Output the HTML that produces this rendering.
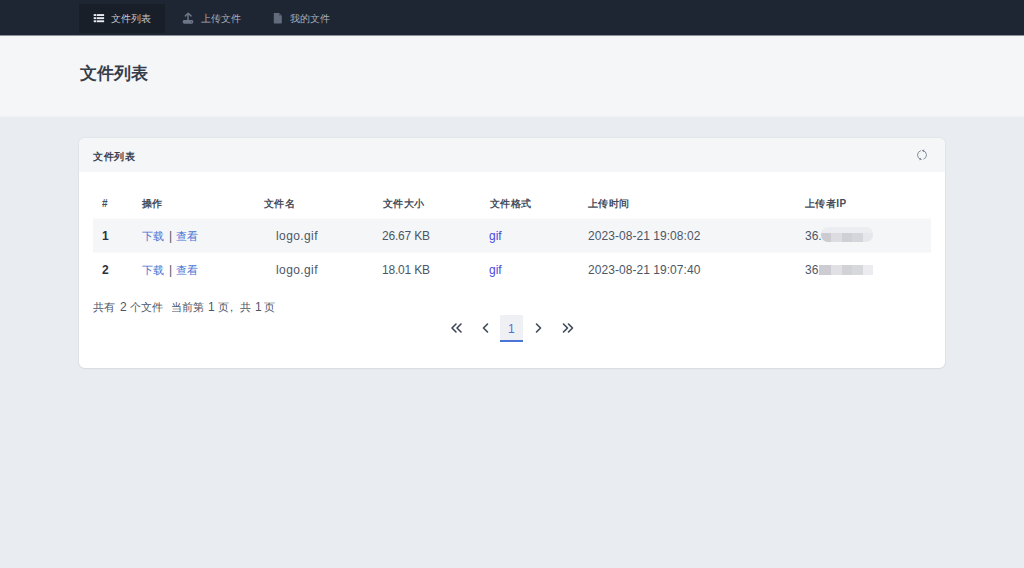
<!DOCTYPE html>
<html><head><meta charset="utf-8">
<style>
*{box-sizing:border-box;margin:0;padding:0}
html,body{width:1024px;height:568px;overflow:hidden}
body{font-family:"Liberation Sans",sans-serif;background:#e9ecf1;color:#1d2939;position:relative}
.abs{position:absolute}
.nav{position:absolute;left:0;top:0;width:1024px;height:35px;background:#1f2633}
.tab-act{position:absolute;left:79px;top:4px;width:86px;height:29px;background:#191f28}
.hdr{position:absolute;left:0;top:35px;width:1024px;height:82px;background:#f5f6f8;border-top:1px solid #8d9199;border-bottom:1px solid #eff1f4}
.card{position:absolute;left:79px;top:138px;width:866px;height:230px;background:#fff;border-radius:6px;overflow:hidden;box-shadow:0 0 0 1px rgba(40,50,70,.03),0 1px 2px rgba(40,50,70,.05)}
.card-h{position:absolute;left:0;top:0;width:866px;height:34px;background:#f5f6f8}
.t{position:absolute;font-size:12px;white-space:nowrap;line-height:20px}
.cj{font-size:11px}
.gif{color:#4b48dc}
.th{font-size:10px;font-weight:bold;color:#454d5b;letter-spacing:.4px}
.row1{position:absolute;left:14px;top:80px;width:838px;height:35px;background:#f5f6f8;border-top:1px solid #fafbfc;border-bottom:1px solid #f9fafb}
.lnk{color:#4a74d6}
.gray{color:#4d5666}
.num{font-weight:bold;color:#2b3340}
.navt{font-size:10px;line-height:20px}
.mz{position:absolute;height:10px}
</style></head><body>
<div class="nav"><div class="tab-act"></div></div>

<!-- list icon -->
<svg class="abs" style="left:93px;top:13px" width="12" height="11" viewBox="0 0 12 11">
  <g fill="#e8ebf0">
    <rect x="0.7" y="1.1" width="2.5" height="1.9"/><rect x="3.8" y="1.1" width="7.3" height="1.9"/>
    <rect x="0.7" y="4.2" width="2.5" height="1.9"/><rect x="3.8" y="4.2" width="7.3" height="1.9"/>
    <rect x="0.7" y="7.3" width="2.5" height="1.9"/><rect x="3.8" y="7.3" width="7.3" height="1.9"/>
  </g>
</svg>
<div class="t navt" style="left:111px;top:9px;color:#c3c8d1">文件列表</div>

<!-- upload icon -->
<svg class="abs" style="left:182px;top:12px" width="12" height="13" viewBox="0 0 12 13">
  <g fill="none" stroke="#6c7686" stroke-width="1.5" stroke-linecap="round" stroke-linejoin="round">
    <path d="M3.4 3.9 L6.2 1.3 L9 3.9"/><path d="M6 2 L6 8.5"/>
  </g>
  <rect x="0.8" y="8" width="10.4" height="3.7" rx="1.4" fill="#6c7686"/>
  <circle cx="9.3" cy="9.7" r="0.55" fill="#2a3240"/>
</svg>
<div class="t navt" style="left:201px;top:9px;color:#a7aebb">上传文件</div>

<!-- file icon -->
<svg class="abs" style="left:273px;top:12px" width="10" height="12" viewBox="0 0 10 12">
  <path d="M0.8 1.6 Q0.8 1 1.4 1 L6 1 L8.8 3.8 L8.8 10.8 Q8.8 11.4 8.2 11.4 L1.4 11.4 Q0.8 11.4 0.8 10.8 Z" fill="#626c7c"/>
  <path d="M6 1 L6 3.8 L8.8 3.8 Z" fill="#465062"/>
</svg>
<div class="t navt" style="left:290px;top:9px;color:#a7aebb">我的文件</div>

<div class="hdr"></div>
<div class="t" style="left:80px;top:64px;font-size:17px;line-height:20px;font-weight:bold;color:#353d4b">文件列表</div>

<div class="card">
  <div class="card-h"></div>
  <div class="row1"></div>
</div>
<div class="t" style="left:93px;top:147px;font-size:10px;letter-spacing:.6px;font-weight:bold;color:#3a4250">文件列表</div>

<!-- refresh icon -->
<svg class="abs" style="left:915.4px;top:148.4px" width="14" height="14" viewBox="0 0 14 14">
  <g fill="none" stroke="#838d9c" stroke-width="1" stroke-linecap="round">
    <path d="M5.46 2.77 A4.5 4.5 0 0 0 5.61 11.28"/>
    <path d="M8.83 11.11 A4.5 4.5 0 0 0 8.09 2.63"/>
  </g>
  <g fill="#838d9c">
    <path d="M6.98 11.72 L4.26 12.31 L5.13 9.65 Z"/>
    <path d="M6.69 2.29 L9.36 1.51 L8.68 4.22 Z"/>
  </g>
</svg>
<div class="t th" style="left:102px;top:194px">#</div>
<div class="t th" style="left:142px;top:194px">操作</div>
<div class="t th" style="left:264px;top:194px">文件名</div>
<div class="t th" style="left:383px;top:194px">文件大小</div>
<div class="t th" style="left:490px;top:194px">文件格式</div>
<div class="t th" style="left:588px;top:194px">上传时间</div>
<div class="t th" style="left:805px;top:194px">上传者IP</div>

<div class="t num" style="left:102px;top:226px">1</div>
<div class="t lnk cj" style="left:142px;top:226px">下载</div>
<div class="t gray" style="left:169px;top:226px">|</div>
<div class="t lnk cj" style="left:176px;top:226px">查看</div>
<div class="t gray" style="left:276px;top:226px;letter-spacing:.4px">logo.gif</div>
<div class="t gray" style="left:382px;top:226px;letter-spacing:-.2px">26.67 KB</div>
<div class="t gif" style="left:489px;top:226px">gif</div>
<div class="t gray" style="left:588px;top:226px;letter-spacing:.05px">2023-08-21 19:08:02</div>
<div class="t gray" style="left:805px;top:226px">36.</div>
<div class="abs" style="left:821px;top:227px;width:52px;height:15px;border-radius:7px;overflow:hidden">
  <div class="mz" style="left:0;top:0;width:52px;height:6px;background:#ecedf0"></div>
  <div class="mz" style="left:0;top:6px;width:10px;height:9px;background:#cbcbd1"></div>
  <div class="mz" style="left:10px;top:6px;width:11px;height:9px;background:#dcdce1"></div>
  <div class="mz" style="left:21px;top:6px;width:10px;height:9px;background:#cfd0d5"></div>
  <div class="mz" style="left:31px;top:6px;width:11px;height:9px;background:#d5d6db"></div>
  <div class="mz" style="left:42px;top:6px;width:10px;height:9px;background:#e6e7eb"></div>
</div>

<div class="t num" style="left:102px;top:260px">2</div>
<div class="t lnk cj" style="left:142px;top:260px">下载</div>
<div class="t gray" style="left:169px;top:260px">|</div>
<div class="t lnk cj" style="left:176px;top:260px">查看</div>
<div class="t gray" style="left:276px;top:260px;letter-spacing:.4px">logo.gif</div>
<div class="t gray" style="left:382px;top:260px;letter-spacing:-.2px">18.01 KB</div>
<div class="t gif" style="left:489px;top:260px">gif</div>
<div class="t gray" style="left:588px;top:260px;letter-spacing:.05px">2023-08-21 19:07:40</div>
<div class="t gray" style="left:805px;top:260px">36</div>
<div class="abs" style="left:819px;top:265px;width:54px;height:10px">
  <div class="mz" style="left:0;top:0;width:12px;background:#cdccd2"></div>
  <div class="mz" style="left:12px;top:0;width:11px;background:#e1e1e5"></div>
  <div class="mz" style="left:23px;top:0;width:10px;background:#d1d1d6"></div>
  <div class="mz" style="left:33px;top:0;width:11px;background:#d7d8dc"></div>
  <div class="mz" style="left:44px;top:0;width:10px;background:#ececf0"></div>
</div>

<div class="t gray cj" style="left:93px;top:297px">共有</div>
<div class="t gray" style="left:120px;top:297px">2</div>
<div class="t gray cj" style="left:130px;top:297px">个文件</div>
<div class="t gray cj" style="left:171px;top:297px">当前第</div>
<div class="t gray" style="left:208px;top:297px">1</div>
<div class="t gray cj" style="left:218px;top:297px">页</div>
<div class="t gray cj" style="left:226px;top:297px">，</div>
<div class="t gray cj" style="left:240px;top:297px">共</div>
<div class="t gray" style="left:255px;top:297px">1</div>
<div class="t gray cj" style="left:264px;top:297px">页</div>

<!-- pagination -->
<svg class="abs" style="left:446px;top:318px" width="136" height="20" viewBox="0 0 136 20">
  <g fill="none" stroke="#3d4757" stroke-width="1.6" stroke-linecap="round" stroke-linejoin="round">
    <path d="M10 6 L6 10 L10 14"/><path d="M15 6 L11 10 L15 14"/>
    <path d="M41.5 6 L37.5 10 L41.5 14"/>
    <path d="M90.5 6 L94.5 10 L90.5 14"/>
    <path d="M117.5 6 L121.5 10 L117.5 14"/><path d="M122.5 6 L126.5 10 L122.5 14"/>
  </g>
</svg>
<div class="abs" style="left:500px;top:315px;width:23px;height:27px;background:#eef0f4;border-bottom:2px solid #4a74d6"></div>
<div class="t" style="left:508px;top:319px;color:#4a74d6;font-size:12px">1</div>
</body></html>
